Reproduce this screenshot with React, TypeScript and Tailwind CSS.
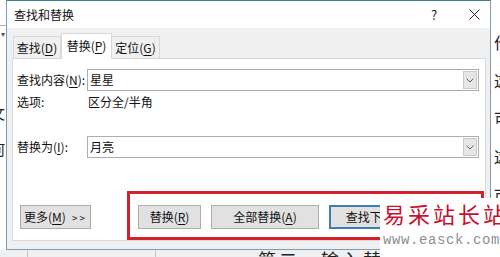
import React from "react";

const cjk = "font-['Noto_Sans_CJK_SC','Noto_Sans',sans-serif]";

function Key({ k }: { k: string }) {
  return <span className="underline underline-offset-2">{k}</span>;
}

function Chevron() {
  return (
    <svg width="8" height="5" viewBox="0 0 8 5" fill="none">
      <path d="M0.5 0.5 L4 4 L7.5 0.5" stroke="#606060" strokeWidth="1" />
    </svg>
  );
}

function ComboBox({ value }: { value: string }) {
  return (
    <div className="flex h-[22px] items-stretch border border-[#abadb3] bg-white">
      <div className="flex flex-1 items-center pl-[2px] text-[12px] text-[#111]">
        {value}
      </div>
      <div className="my-px mr-px flex w-[14px] items-center justify-center border border-[#c9c9c9] bg-[#e6e6e6]">
        <Chevron />
      </div>
    </div>
  );
}

function Button({
  children,
  width,
  primary,
}: {
  children: React.ReactNode;
  width: string;
  primary?: boolean;
}) {
  return (
    <button
      className={
        "flex h-[24px] shrink-0 items-center justify-center whitespace-nowrap bg-[#e1e1e1] text-[12px] text-[#111] " +
        width +
        (primary ? " border-2 border-[#3c7fb1]" : " border border-[#adadad]")
      }
    >
      {children}
    </button>
  );
}

export default function App() {
  return (
    <div
      className={
        "relative h-[257px] w-[500px] overflow-hidden bg-white " + cjk
      }
    >
      {/* document behind the dialog */}
      <div className="absolute left-0 top-[25px] h-px w-[6px] bg-[#b9b9b9]" />
      <div className="absolute left-[1px] top-[28px] text-[8px] text-[#555]">▾</div>
      <div className="absolute left-[-10px] top-[102px] text-[15px] text-[#222]">文</div>
      <div className="absolute left-[-10px] top-[138px] text-[15px] text-[#222]">何</div>
      <div className="absolute left-[494px] top-[33px] flex flex-col gap-[20px] text-[16px] leading-[18px] text-[#222]">
        <span>作</span>
        <span>这</span>
        <span>可</span>
        <span>这</span>
        <span>市</span>
      </div>
      <div className="absolute left-0 top-[250px] h-[7px] w-[500px] bg-[#eef0f2]" />
      <div className="absolute left-[27px] top-[250px] h-[7px] w-px bg-[#c8c8c8]" />
      <div className="absolute left-[155px] top-[250px] h-[7px] w-px bg-[#c8c8c8]" />
      <div className="absolute left-[258px] top-[249px] whitespace-nowrap text-[18px] leading-[20px] tracking-[3px] text-[#222]">
        第二、输入替换为
      </div>

      {/* dialog window */}
      <div className="absolute left-[6px] top-0 flex h-[250px] w-[485px] flex-col border border-[#7b9cb4] border-t-[#3d7f93] bg-[#f0f0f0]">
        <div className="flex h-[27px] items-center justify-between bg-white">
          <span className="pl-[7px] text-[12px] text-[#111]">查找和替换</span>
          <div className="flex items-center gap-[10px] pr-[1px]">
            <span className="flex w-[30px] justify-center text-[13px] text-[#222]">?</span>
            <span className="flex w-[30px] justify-center">
              <svg width="11" height="11" viewBox="0 0 11 11">
                <path d="M0.5 0.5 L10.5 10.5 M10.5 0.5 L0.5 10.5" stroke="#222" strokeWidth="1" />
              </svg>
            </span>
          </div>
        </div>

        <div className="flex flex-1 flex-col pl-[5px] pr-[4px]">
          {/* tabs */}
          <div className="relative z-10 -mb-px mt-[5px] flex h-[26px] items-end pl-px">
            <div className="mb-px flex h-[22px] w-[48px] items-center justify-center border border-b-0 border-[#d9d9d9] text-[12px] text-[#111]">
              查找(<Key k="D" />)
            </div>
            <div className="flex h-[26px] w-[51px] items-center justify-center border-x border-t border-[#d9d9d9] bg-white pb-[2px] text-[12px] text-[#111]">
              替换(<Key k="P" />)
            </div>
            <div className="mb-px flex h-[22px] w-[48px] items-center justify-center border border-b-0 border-l-0 border-[#d9d9d9] text-[12px] text-[#111]">
              定位(<Key k="G" />)
            </div>
          </div>

          {/* tab panel */}
          <div className="flex h-[183px] flex-col border border-[#d9d9d9] bg-white pl-[4px] pr-[6px] pt-[10px] text-[12px] text-[#111]">
            <div className="grid grid-cols-[70px_1fr] items-center">
              <span>
                查找内容(<Key k="N" />):
              </span>
              <ComboBox value="星星" />
            </div>
            <div className="grid h-[22px] grid-cols-[70px_1fr] items-center">
              <span>选项:</span>
              <span className="pl-px">区分全/半角</span>
            </div>
            <div className="mt-[23px] grid grid-cols-[70px_1fr] items-center">
              <span>
                替换为(<Key k="I" />):
              </span>
              <ComboBox value="月亮" />
            </div>
            <div className="ml-[3px] mt-[47px] flex items-center">
              <Button width="w-[71px]">
                <span>
                  更多(<Key k="M" />)
                </span>
                <span className="ml-[6px] text-[10px] tracking-[2px]">&gt;&gt;</span>
              </Button>
              <div className="ml-[47px] flex gap-[10px]">
                <Button width="w-[63px]">
                  替换(<Key k="R" />)
                </Button>
                <Button width="w-[108px]">
                  全部替换(<Key k="A" />)
                </Button>
                <Button width="w-[108px]" primary>
                  查找下一处(<Key k="F" />)
                </Button>
              </div>
            </div>
          </div>
        </div>
      </div>

      {/* red annotation frame */}
      <div className="absolute left-[127px] top-[191px] h-[49px] w-[357px] border-[3px] border-[#d3202b]" />

      {/* watermark */}
      <div className="absolute left-[380px] top-[198px] flex h-[59px] w-[120px] flex-col whitespace-nowrap bg-white pl-[3px]">
        <span className="text-[22px] leading-[30px] tracking-[3px] text-[#c8102e]">
          易采站长站
        </span>
        <span className="mt-[4px] font-['Liberation_Mono',monospace] text-[14px] leading-[16px] tracking-[0.6px] text-[#8f8f8f]">
          www.easck.com
        </span>
      </div>
    </div>
  );
}
